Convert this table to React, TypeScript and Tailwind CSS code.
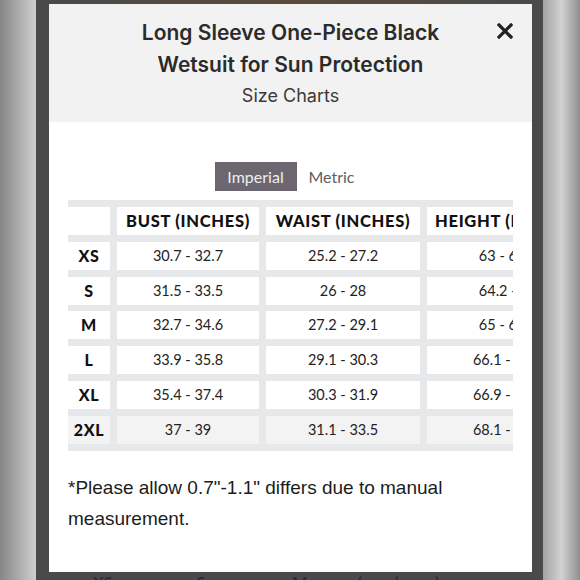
const sizes = [
  { size: 'XS', bust: '30.7 - 32.7', waist: '25.2 - 27.2', height: '63 - 64.2' },
  { size: 'S', bust: '31.5 - 33.5', waist: '26 - 28', height: '64.2 - 65' },
  { size: 'M', bust: '32.7 - 34.6', waist: '27.2 - 29.1', height: '65 - 66.1' },
  { size: 'L', bust: '33.9 - 35.8', waist: '29.1 - 30.3', height: '66.1 - 66.9' },
  { size: 'XL', bust: '35.4 - 37.4', waist: '30.3 - 31.9', height: '66.9 - 68.1' },
  { size: '2XL', bust: '37 - 39', waist: '31.1 - 33.5', height: '68.1 - 69.3' },
];

const gill = "font-['Lato','Open_Sans',sans-serif]";

const SizeTable = () => {
  return (
    <div className="w-full overflow-hidden">
      <div
        className={`grid w-max grid-cols-[42px_142px_154px_162px] gap-x-[7px] gap-y-[6.75px] bg-[#e7e8ea] pt-[7px] pb-[7px] ${gill}`}
      >
        <div className="h-[28px] bg-white" />
        <div className="flex h-[28px] items-center justify-center bg-white text-[16.5px] font-black tracking-[0.7px] text-[#111]">
          BUST (INCHES)
        </div>
        <div className="flex h-[28px] items-center justify-center bg-white text-[16.5px] font-black tracking-[0.7px] text-[#111]">
          WAIST (INCHES)
        </div>
        <div className="flex h-[28px] items-center justify-start bg-white pl-[8px] text-[16.5px] font-black tracking-[0.7px] text-[#111]">
          HEIGHT (INCHES)
        </div>
        {sizes.map((row) => {
          const bg = row.size === '2XL' ? 'bg-[#f3f3f4]' : 'bg-white';
          return [
            <div
              key={row.size + 'l'}
              className={`flex h-[28px] items-center justify-center ${bg} text-[16px] font-black tracking-[0.6px] text-[#111]`}
            >
              {row.size}
            </div>,
            <div
              key={row.size + 'b'}
              className={`flex h-[28px] items-center justify-center ${bg} text-[14.5px] text-[#222]`}
            >
              {row.bust}
            </div>,
            <div
              key={row.size + 'w'}
              className={`flex h-[28px] items-center justify-center ${bg} text-[14.5px] text-[#222]`}
            >
              {row.waist}
            </div>,
            <div
              key={row.size + 'h'}
              className={`flex h-[28px] items-center justify-center ${bg} text-[14.5px] text-[#222]`}
            >
              {row.height}
            </div>,
          ];
        })}
      </div>
    </div>
  );
};

const App = () => {
  return (
    <div className="flex h-[580px] w-[580px] overflow-hidden">
      <div className="h-full w-[36px] bg-linear-to-r from-[#868686] to-[#cfcfcf]" />

      <div className="flex h-full w-[507px] flex-col bg-[#4a4a4a] pl-[13px] pr-[11px]">
        <div className="h-[4px] bg-linear-to-r from-[#4a4a4a] via-[#5a4a3c] to-[#4a4a4a]" />

        <div className="relative flex h-[568px] flex-col bg-white">
          <div className="flex h-[118px] flex-col items-center bg-[#f2f2f2] pt-[13px] font-['Inter',sans-serif]">
            <h2 className="text-center text-[21px] font-semibold leading-[32px] text-[#2b2b2b]">
              Long Sleeve One-Piece Black
              <br />
              Wetsuit for Sun Protection
            </h2>
            <p className="mt-[3px] text-[18px] leading-[24px] text-[#3a3a3a]">Size Charts</p>
          </div>

          <button className="absolute right-[19px] top-[19px] text-[#222]">
            <svg width="16" height="16" viewBox="0 0 16 16">
              <path d="M2 2 L14 14 M14 2 L2 14" stroke="currentColor" strokeWidth="3.2" strokeLinecap="square" />
            </svg>
          </button>

          <div className="flex flex-col px-[19px] pt-[40px]">
            <div className={`flex justify-center ${gill} text-[16px]`}>
              <button className="h-[29px] w-[82px] bg-[#6b6670] text-[#f1eff2]">Imperial</button>
              <button className="h-[29px] w-[70px] text-[#5f5d62]">Metric</button>
            </div>

            <div className="mt-[9px]">
              <SizeTable />
            </div>

            <p className="mt-[21px] font-['Liberation_Sans',Arial,sans-serif] text-[19px] leading-[31px] text-[#1c1c1c]">
              *Please allow 0.7"-1.1" differs due to manual
              <br />
              measurement.
            </p>
          </div>
        </div>

        <div className="relative h-[8px] overflow-hidden font-['Lato',sans-serif] text-[16px] font-bold text-[#2e2e2e]">
          <div className="flex leading-[20px]">
            <span className="ml-[44px]">XS</span>
            <span className="ml-[84px]">S</span>
            <span className="ml-[87px]">M</span>
            <span className="ml-[50px]">(</span>
            <span className="ml-[33px]">|</span>
            <span className="ml-[36px]">)</span>
          </div>
        </div>
      </div>

      <div className="h-full w-[37px] bg-linear-to-r from-[#a4a4a4] via-[#d2d2d2] to-[#8f8f8f]" />
    </div>
  );
};

export default App;
